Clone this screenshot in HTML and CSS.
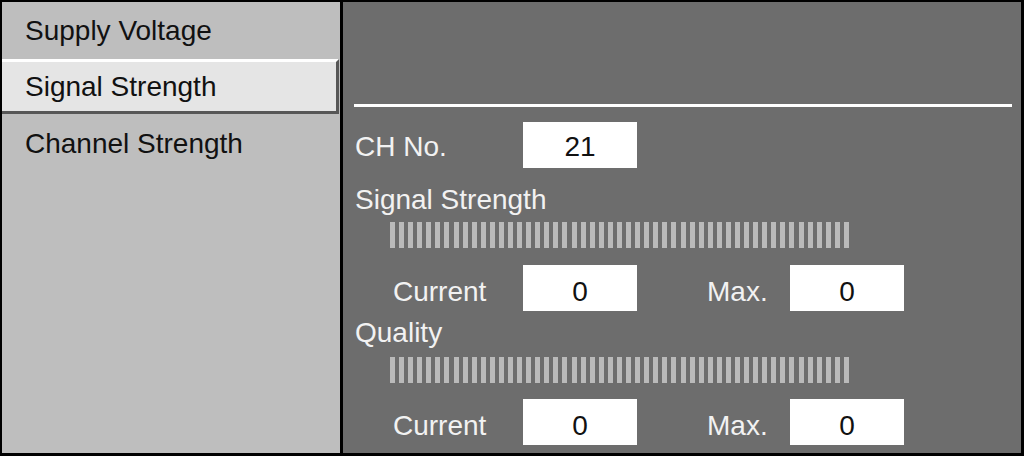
FILE: index.html
```html
<!DOCTYPE html>
<html lang="en">

<head>
    <meta charset="UTF-8" />
    <meta name="viewport" content="width=device-width, initial-scale=1.0" />
    <title>Signal Strength</title>
    <link rel="stylesheet" href="styles.css">
</head>

<body>
    <div class="screen">
        <ul class="menu">
            <li class="menu-item">Supply Voltage</li>
            <li class="menu-item active">Signal Strength</li>
            <li class="menu-item">Channel Strength</li>
        </ul>

        <div class="panel">
            <div class="rule"></div>

            <div class="ch-row">
                <span class="ch-label">CH No.</span>
                <span class="box">21</span>
            </div>

            <div class="section-title">Signal Strength</div>
            <div class="meter" id="signalMeter"></div>
            <div class="readings">
                <span class="label-current">Current</span>
                <span class="box">0</span>
                <span class="label-max">Max.</span>
                <span class="box">0</span>
            </div>

            <div class="section-title quality">Quality</div>
            <div class="meter quality-meter" id="qualityMeter"></div>
            <div class="readings last">
                <span class="label-current">Current</span>
                <span class="box">0</span>
                <span class="label-max">Max.</span>
                <span class="box">0</span>
            </div>
        </div>
    </div>

    <script>
        // fill both meters with their segments
        ['signalMeter', 'qualityMeter'].forEach(function (id) {
            const meter = document.getElementById(id);
            for (let i = 0; i < 51; i++) {
                const seg = document.createElement('span');
                seg.className = 'seg';
                meter.appendChild(seg);
            }
        });
    </script>
</body>

</html>
```

FILE: styles.css
```css
html,
body {
    margin: 0;
    height: 100%;
}

body {
    background-color: #000000;
    font-family: "Liberation Sans", Arial, sans-serif;
    font-size: 28px;
    line-height: 30px;
    overflow: hidden;
}

.screen {
    display: flex;
    gap: 3px;
    height: 456px;
    box-sizing: border-box;
    padding: 2px 3px 3px 2px;
}

/* left menu */
.menu {
    list-style: none;
    margin: 0;
    padding: 0;
    width: 338px;
    flex-shrink: 0;
    background-color: #bebebe;
    color: #111111;
}

.menu-item {
    height: 57px;
    display: flex;
    align-items: center;
    padding-left: 23px;
    box-sizing: border-box;
}

.menu-item.active {
    height: 55px;
    margin-right: 1px;
    background-color: #e5e5e5;
    border-top: 3px solid #ffffff;
    border-right: 3px solid #575757;
    border-bottom: 3px solid #575757;
    padding-top: 1px;
}

.menu-item.active + .menu-item {
    padding-top: 3px;
}

/* right panel */
.panel {
    flex: 1;
    background-color: #6d6d6d;
    color: #f2f2f2;
    padding: 0 9px 0 12px;
}

.rule {
    height: 3px;
    margin: 102px 0 0 -1px;
    background-color: #ffffff;
}

.box {
    display: flex;
    align-items: center;
    justify-content: center;
    width: 114px;
    height: 46px;
    box-sizing: border-box;
    background-color: #ffffff;
    color: #111111;
}

.ch-row {
    display: flex;
    align-items: center;
    margin-top: 15px;
}

.ch-row .box {
    padding-top: 3px;
}

.ch-label {
    width: 168px;
    padding-top: 3px;
}

.section-title {
    margin-top: 17px;
}

.section-title.quality {
    margin-top: 7px;
}

.meter {
    display: flex;
    justify-content: space-between;
    width: 459px;
    height: 26px;
    margin: 7px 0 0 35px;
}

.quality-meter {
    margin-top: 9px;
}

.seg {
    width: 5px;
    background-color: #bababa;
}

.readings {
    display: flex;
    align-items: center;
    margin-top: 17px;
    padding-left: 38px;
}

.readings.last {
    margin-top: 16px;
}

.readings .box {
    padding-top: 7px;
}

.label-current {
    width: 130px;
    padding-top: 7px;
}

.label-max {
    width: 83px;
    margin-left: 70px;
    padding-top: 7px;
}
```
